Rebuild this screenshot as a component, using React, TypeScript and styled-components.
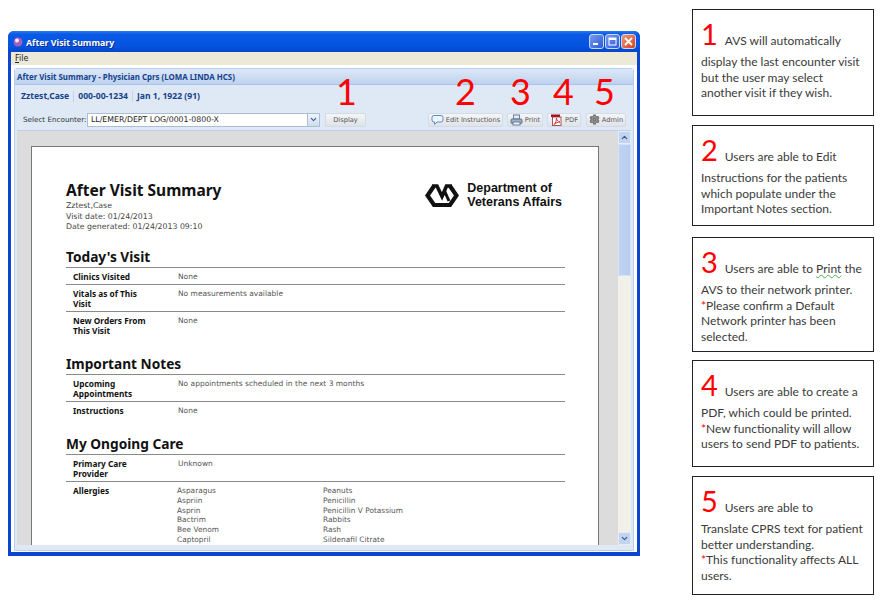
import styled, { createGlobalStyle } from 'styled-components';
import { ChevronDown, ChevronUp, Settings } from 'lucide-react';

const GlobalStyle = createGlobalStyle`
  html, body { margin: 0; padding: 0; background: #fff; }
  * { box-sizing: border-box; }
`;

const Page = styled.div`
  width: 880px;
  height: 602px;
  display: flex;
  align-items: flex-start;
  overflow: hidden;
  background: #fff;
`;

const Window = styled.div`
  width: 632px;
  height: 525px;
  margin: 31px 0 0 8px;
  display: flex;
  flex-direction: column;
  background: #0b45d0;
  border-radius: 6px 6px 0 0;
  padding: 0 3px 4px;
  flex: none;
`;

const TitleBar = styled.div`
  height: 21px;
  margin: 0 -3px;
  padding: 0 4px 0 5px;
  display: flex;
  align-items: center;
  border-radius: 6px 6px 0 0;
  background: linear-gradient(180deg, #2b7bf0 0%, #0a5ae6 15%, #0553e0 75%, #0446c8 100%);
`;

const AppIcon = styled.svg`
  width: 10px;
  height: 10px;
  margin-right: 3px;
  flex: none;
`;

const TitleText = styled.div`
  flex: 1;
  padding-top: 2px;
  font: bold 8.8px 'Noto Sans', sans-serif;
  color: #fff;
  text-shadow: 1px 1px 0 #0a2f90;
`;

const WinButton = styled.div<{ $close?: boolean }>`
  width: 15px;
  height: 15px;
  margin-left: 1px;
  border: 1px solid #c9d8fa;
  border-radius: 3px;
  display: flex;
  align-items: center;
  justify-content: center;
  background: ${(p) => (p.$close ? 'linear-gradient(135deg, #ee9a78, #d8401c)' : 'linear-gradient(135deg, #7a9cf0, #2a58d8)')};
`;

const WinGlyph = styled.svg`
  width: 11px;
  height: 11px;
  display: block;
`;

const MenuBar = styled.div`
  height: 13px;
  padding-left: 4px;
  background: #ece9d8;
  font: 8px/13px 'DejaVu Sans', sans-serif;
  color: #222;
  u { text-decoration: underline; }
`;

const Client = styled.div`
  flex: 1;
  min-height: 0;
  background: #fff;
  padding: 3px 3px 1px;
  display: flex;
  flex-direction: column;
`;

const Panel = styled.div`
  position: relative;
  flex: 1;
  min-height: 0;
  display: flex;
  flex-direction: column;
  background: #dfe8f5;
  border: 1px solid #b9cfee;
  border-radius: 3px 3px 0 0;
`;

const PanelHeader = styled.div`
  height: 16px;
  padding-left: 2px;
  background: linear-gradient(180deg, #dde8f7 0%, #bdd2ef 100%);
  border-bottom: 1px solid #a9c4ea;
  font: bold 7.9px/16px 'Noto Sans', sans-serif;
  color: #15428b;
`;

const PatientRow = styled.div`
  height: 26px;
  padding: 0 0 4px 6px;
  display: flex;
  align-items: center;
  font: bold 8.6px 'Noto Sans', sans-serif;
  color: #15428b;
`;

const PatientItem = styled.div`
  padding-right: 4px;
  margin-right: 4px;
  line-height: 11px;
  border-right: 1px solid #c0d2ec;
  &:last-child { border-right: 0; }
`;

const EncounterRow = styled.div`
  height: 19px;
  padding: 0 6px 2px 8px;
  display: flex;
  align-items: center;
`;

const FieldLabel = styled.div`
  width: 64px;
  font: 7.2px 'DejaVu Sans', sans-serif;
  color: #333;
  white-space: nowrap;
`;

const SelectBox = styled.div`
  width: 221px;
  height: 14px;
  padding-left: 3px;
  background: #fff;
  border: 1px solid #a9bfd8;
  font: 7.8px/12px 'DejaVu Sans', sans-serif;
  color: #222;
`;

const SelectArrow = styled.div`
  width: 12px;
  height: 14px;
  margin-right: 5px;
  display: flex;
  align-items: center;
  justify-content: center;
  background: linear-gradient(180deg, #f0f4fa, #cfdcee);
  border: 1px solid #a9bfd8;
  border-left: 0;
  color: #345a94;
`;

const ToolButton = styled.div<{ $w: number; $gap?: number }>`
  width: ${(p) => p.$w}px;
  margin-left: ${(p) => p.$gap ?? 0}px;
  height: 14px;
  display: flex;
  align-items: center;
  justify-content: center;
  gap: 2px;
  background: linear-gradient(180deg, #f4f5f6, #dfe3e8);
  border: 1px solid #d3dbe6;
  border-radius: 2px;
  font: 6.7px 'DejaVu Sans', sans-serif;
  color: #555;
  white-space: nowrap;
`;

const ToolIcon = styled.svg`
  width: 13px;
  height: 12px;
  flex: none;
`;

const Callout = styled.div<{ $left: number; $top: number }>`
  position: absolute;
  left: ${(p) => p.$left}px;
  top: ${(p) => p.$top}px;
  font: 36px/36px Lato, sans-serif;
  color: #f00;
`;

const ContentRow = styled.div`
  flex: 1;
  min-height: 0;
  display: flex;
  margin: 0 2px 5px;
  border-top: 1px solid #bcd0ea;
`;

const Viewport = styled.div`
  flex: 1;
  min-width: 0;
  overflow: hidden;
  background: #dcdcdc;
  padding: 15px 19px 0 14px;
`;

const Scrollbar = styled.div`
  width: 13px;
  flex: none;
  display: flex;
  flex-direction: column;
  background: #f1f0e9;
`;

const ScrollButton = styled.div`
  height: 13px;
  display: flex;
  align-items: center;
  justify-content: center;
  background: #c3d4ef;
  color: #34558c;
  border: 1px solid #e4ecf8;
`;

const ScrollThumb = styled.div`
  height: 132px;
  background: linear-gradient(90deg, #c1d3f2, #b7ccef);
  border: 1px solid #d6e2f6;
`;

const ScrollTrack = styled.div`
  flex: 1;
`;

const Sheet = styled.div`
  min-height: 500px;
  background: #fff;
  border: 1px solid #777;
  border-bottom: 0;
  padding: 34px 33px 0 34px;
  font: 8px 'DejaVu Sans', sans-serif;
  color: #444;
`;

const DocHeader = styled.div`
  display: flex;
  justify-content: space-between;
  align-items: flex-start;
  height: 60px;
  margin-bottom: 8px;
`;

const DocTitle = styled.div`
  font: bold 15.5px/18px 'Noto Sans', sans-serif;
  color: #111;
  margin-bottom: 2px;
`;

const MetaLine = styled.div`
  font: 7.8px/10.7px 'DejaVu Sans', sans-serif;
  color: #444;
`;

const Seal = styled.div`
  display: flex;
  align-items: center;
  gap: 8px;
  margin: 0 3px 0 0;
`;

const SealText = styled.div`
  font: bold 12.5px/14px 'Liberation Sans', sans-serif;
  color: #111;
`;

const SectionTitle = styled.div<{ $top?: number }>`
  margin-top: ${(p) => p.$top ?? 0}px;
  padding-bottom: 2px;
  font: bold 13.7px/16px 'Noto Sans', sans-serif;
  color: #111;
`;

const Rows = styled.div`
  border-top: 1px solid #8a8a8a;
`;

const Row = styled.div`
  display: flex;
  padding: 4px 0 2.4px 7px;
  border-bottom: 1px solid #8a8a8a;
  &:last-child { border-bottom: 0; }
`;

const RowLabel = styled.div`
  width: 105px;
  padding-right: 29px;
  flex: none;
  font: bold 8.3px/9.8px 'Noto Sans', sans-serif;
  color: #111;
`;

const RowValue = styled.div`
  font: 7.5px/9.8px 'DejaVu Sans', sans-serif;
  color: #555;
`;

const AllergyList = styled.div`
  display: grid;
  grid-template-columns: 146px 200px;
  margin-left: -1px;
  font: 7.4px/9.7px 'DejaVu Sans', sans-serif;
  color: #555;
`;

const Notes = styled.div`
  width: 182px;
  margin: 9px 0 0 52px;
  flex: none;
`;

const Note = styled.div<{ $h: number; $gap?: number }>`
  height: ${(p) => p.$h}px;
  margin-bottom: ${(p) => p.$gap ?? 0}px;
  padding: 7px 4px 0 8px;
  border: 1px solid #222;
  font: 12px/15.6px Lato, sans-serif;
  color: #3a3a3a;
  white-space: nowrap;
`;

const NoteLead = styled.div`
  height: 37px;
  display: flex;
  align-items: baseline;
  gap: 7px;
`;

const NoteNumber = styled.span`
  font: 29px/33px Lato, sans-serif;
  color: #f00;
`;

const Star = styled.span`
  color: #f00;
`;

const Squiggle = styled.span`
  text-decoration: underline wavy #4caf50 1px;
`;

const rows_today = [
  ['Clinics Visited', 'None'],
  ['Vitals as of This Visit', 'No measurements available'],
  ['New Orders From This Visit', 'None'],
];

const rows_notes = [
  ['Upcoming Appointments', 'No appointments scheduled in the next 3 months'],
  ['Instructions', 'None'],
];

const allergies = [
  'Asparagus', 'Peanuts', 'Aspriin', 'Penicillin', 'Asprin', 'Penicillin V Potassium',
  'Bactrim', 'Rabbits', 'Bee Venom', 'Rash', 'Captopril', 'Sildenafil Citrate', 'Cheese', 'Sulfa',
];

const callouts = [
  { n: 1, left: 321, top: 4 },
  { n: 2, left: 440, top: 4 },
  { n: 3, left: 495, top: 4 },
  { n: 4, left: 538, top: 4 },
  { n: 5, left: 579, top: 4 },
];

function App() {
  return (
    <>
      <GlobalStyle />
      <Page>
        <Window>
          <TitleBar>
            <AppIcon viewBox="0 0 10 10">
              <circle cx="5" cy="5" r="4.5" fill="#a060b8" />
              <circle cx="4" cy="3.6" r="2" fill="#f4e6f6" />
            </AppIcon>
            <TitleText>After Visit Summary</TitleText>
            <WinButton>
              <WinGlyph viewBox="0 0 11 11">
                <rect x="2" y="7" width="5" height="2" fill="#fff" />
              </WinGlyph>
            </WinButton>
            <WinButton>
              <WinGlyph viewBox="0 0 11 11">
                <rect x="2" y="2" width="7" height="7" fill="none" stroke="#fff" strokeWidth="1" />
                <rect x="2" y="2" width="7" height="2" fill="#fff" />
              </WinGlyph>
            </WinButton>
            <WinButton $close>
              <WinGlyph viewBox="0 0 11 11">
                <path d="M2 2l7 7M9 2l-7 7" stroke="#fff" strokeWidth="1.8" />
              </WinGlyph>
            </WinButton>
          </TitleBar>
          <MenuBar><u>F</u>ile</MenuBar>
          <Client>
            <Panel>
              <PanelHeader>After Visit Summary - Physician Cprs (LOMA LINDA HCS)</PanelHeader>
              <PatientRow>
                <PatientItem>Zztest,Case</PatientItem>
                <PatientItem>000-00-1234</PatientItem>
                <PatientItem>Jan 1, 1922 (91)</PatientItem>
              </PatientRow>
              <EncounterRow>
                <FieldLabel>Select Encounter:</FieldLabel>
                <SelectBox>LL/EMER/DEPT LOG/0001-0800-X</SelectBox>
                <SelectArrow><ChevronDown size={9} strokeWidth={3} /></SelectArrow>
                <ToolButton $w={41}>Display</ToolButton>
                <ToolButton $w={75} $gap={62}>
                  <ToolIcon viewBox="0 0 13 12">
                    <path d="M3 1.5h7q2 0 2 2v2.500q0 2-2 2H6l-2.500 2.500V8H3q-2 0-2-2V3.500q0-2 2-2z" fill="#eef4fc" stroke="#5b8cc8" />
                  </ToolIcon>
                  Edit Instructions
                </ToolButton>
                <ToolButton $w={36} $gap={4}>
                  <ToolIcon viewBox="0 0 13 12">
                    <rect x="3.5" y="1" width="6" height="4" fill="#e8eef6" stroke="#6a7f9c" />
                    <rect x="1" y="5" width="11" height="4.5" rx="1" fill="#9fb0c6" stroke="#5f7390" />
                    <rect x="3" y="8" width="7" height="3" fill="#eef2f7" stroke="#6a7f9c" />
                  </ToolIcon>
                  Print
                </ToolButton>
                <ToolButton $w={34} $gap={4}>
                  <ToolIcon viewBox="0 0 13 12">
                    <rect x="1" y="0.5" width="9" height="2.5" fill="#a01420" />
                    <rect x="2.5" y="3" width="8.5" height="8.5" fill="#fff" stroke="#9a2a30" strokeWidth="0.8" />
                    <path d="M4 10.500c2-1.500 2.500-4.500 2.400-6.500.6 2.500 1.600 3.500 3.600 4-2 .1-4 .8-6 2.500z" fill="none" stroke="#c8202c" strokeWidth="0.9" />
                  </ToolIcon>
                  PDF
                </ToolButton>
                <ToolButton $w={40} $gap={5}>
                  <Settings size={11} strokeWidth={3} color="#777" fill="#999" />
                  Admin
                </ToolButton>
              </EncounterRow>
              <ContentRow>
                <Viewport>
                  <Sheet>
                    <DocHeader>
                      <div>
                        <DocTitle>After Visit Summary</DocTitle>
                        <MetaLine>Zztest,Case</MetaLine>
                        <MetaLine>Visit date: 01/24/2013</MetaLine>
                        <MetaLine>Date generated: 01/24/2013 09:10</MetaLine>
                      </div>
                      <Seal>
                        <svg width="34" height="25" viewBox="0 0 34 25">
                          <path d="M9 3L2.500 12.500 9 22H25L31.500 12.500 25 3" fill="none" stroke="#111" strokeWidth="4.200" strokeLinejoin="miter" />
                          <path d="M7 3H12L17 13.500 21.500 3H27" fill="none" stroke="#111" strokeWidth="3.600" />
                          <path d="M16.500 14L20 9 24 18" fill="none" stroke="#111" strokeWidth="3" />
                          <path d="M8.500 8L15 19.500" fill="none" stroke="#fff" strokeWidth="1.300" />
                        </svg>
                        <SealText>Department of<br />Veterans Affairs</SealText>
                      </Seal>
                    </DocHeader>
                    <SectionTitle>Today's Visit</SectionTitle>
                    <Rows>
                      {rows_today.map((r) => (
                        <Row key={r[0]}>
                          <RowLabel>{r[0]}</RowLabel>
                          <RowValue>{r[1]}</RowValue>
                        </Row>
                      ))}
                    </Rows>
                    <SectionTitle $top={18}>Important Notes</SectionTitle>
                    <Rows>
                      {rows_notes.map((r) => (
                        <Row key={r[0]}>
                          <RowLabel>{r[0]}</RowLabel>
                          <RowValue>{r[1]}</RowValue>
                        </Row>
                      ))}
                    </Rows>
                    <SectionTitle $top={18}>My Ongoing Care</SectionTitle>
                    <Rows>
                      <Row>
                        <RowLabel>Primary Care Provider</RowLabel>
                        <RowValue>Unknown</RowValue>
                      </Row>
                      <Row>
                        <RowLabel>Allergies</RowLabel>
                        <AllergyList>
                          {allergies.map((a) => <div key={a}>{a}</div>)}
                        </AllergyList>
                      </Row>
                    </Rows>
                  </Sheet>
                </Viewport>
                <Scrollbar>
                  <ScrollButton><ChevronUp size={9} strokeWidth={3} /></ScrollButton>
                  <ScrollThumb />
                  <ScrollTrack />
                  <ScrollButton><ChevronDown size={9} strokeWidth={3} /></ScrollButton>
                </Scrollbar>
              </ContentRow>
              {callouts.map((c) => (
                <Callout key={c.n} $left={c.left} $top={c.top}>{c.n}</Callout>
              ))}
            </Panel>
          </Client>
        </Window>
        <Notes>
          <Note $h={107} $gap={9}>
            <NoteLead><NoteNumber>1</NoteNumber>AVS will automatically</NoteLead>
            display the last encounter visit<br />
            but the user may select<br />
            another visit if they wish.
          </Note>
          <Note $h={101} $gap={11}>
            <NoteLead><NoteNumber>2</NoteNumber>Users are able to Edit</NoteLead>
            Instructions for the patients<br />
            which populate under the<br />
            Important Notes section.
          </Note>
          <Note $h={115} $gap={8}>
            <NoteLead><NoteNumber>3</NoteNumber><span>Users are able to <Squiggle>Print</Squiggle> the</span></NoteLead>
            AVS to their network printer.<br />
            <Star>*</Star>Please confirm a Default<br />
            Network printer has been<br />
            selected.
          </Note>
          <Note $h={107} $gap={9}>
            <NoteLead><NoteNumber>4</NoteNumber>Users are able to create a</NoteLead>
            PDF, which could be printed.<br />
            <Star>*</Star>New functionality will allow<br />
            users to send PDF to patients.
          </Note>
          <Note $h={119}>
            <NoteLead><NoteNumber>5</NoteNumber>Users are able to</NoteLead>
            Translate CPRS text for patient<br />
            better understanding.<br />
            <Star>*</Star>This functionality affects ALL<br />
            users.
          </Note>
        </Notes>
      </Page>
    </>
  );
}

export default App;
